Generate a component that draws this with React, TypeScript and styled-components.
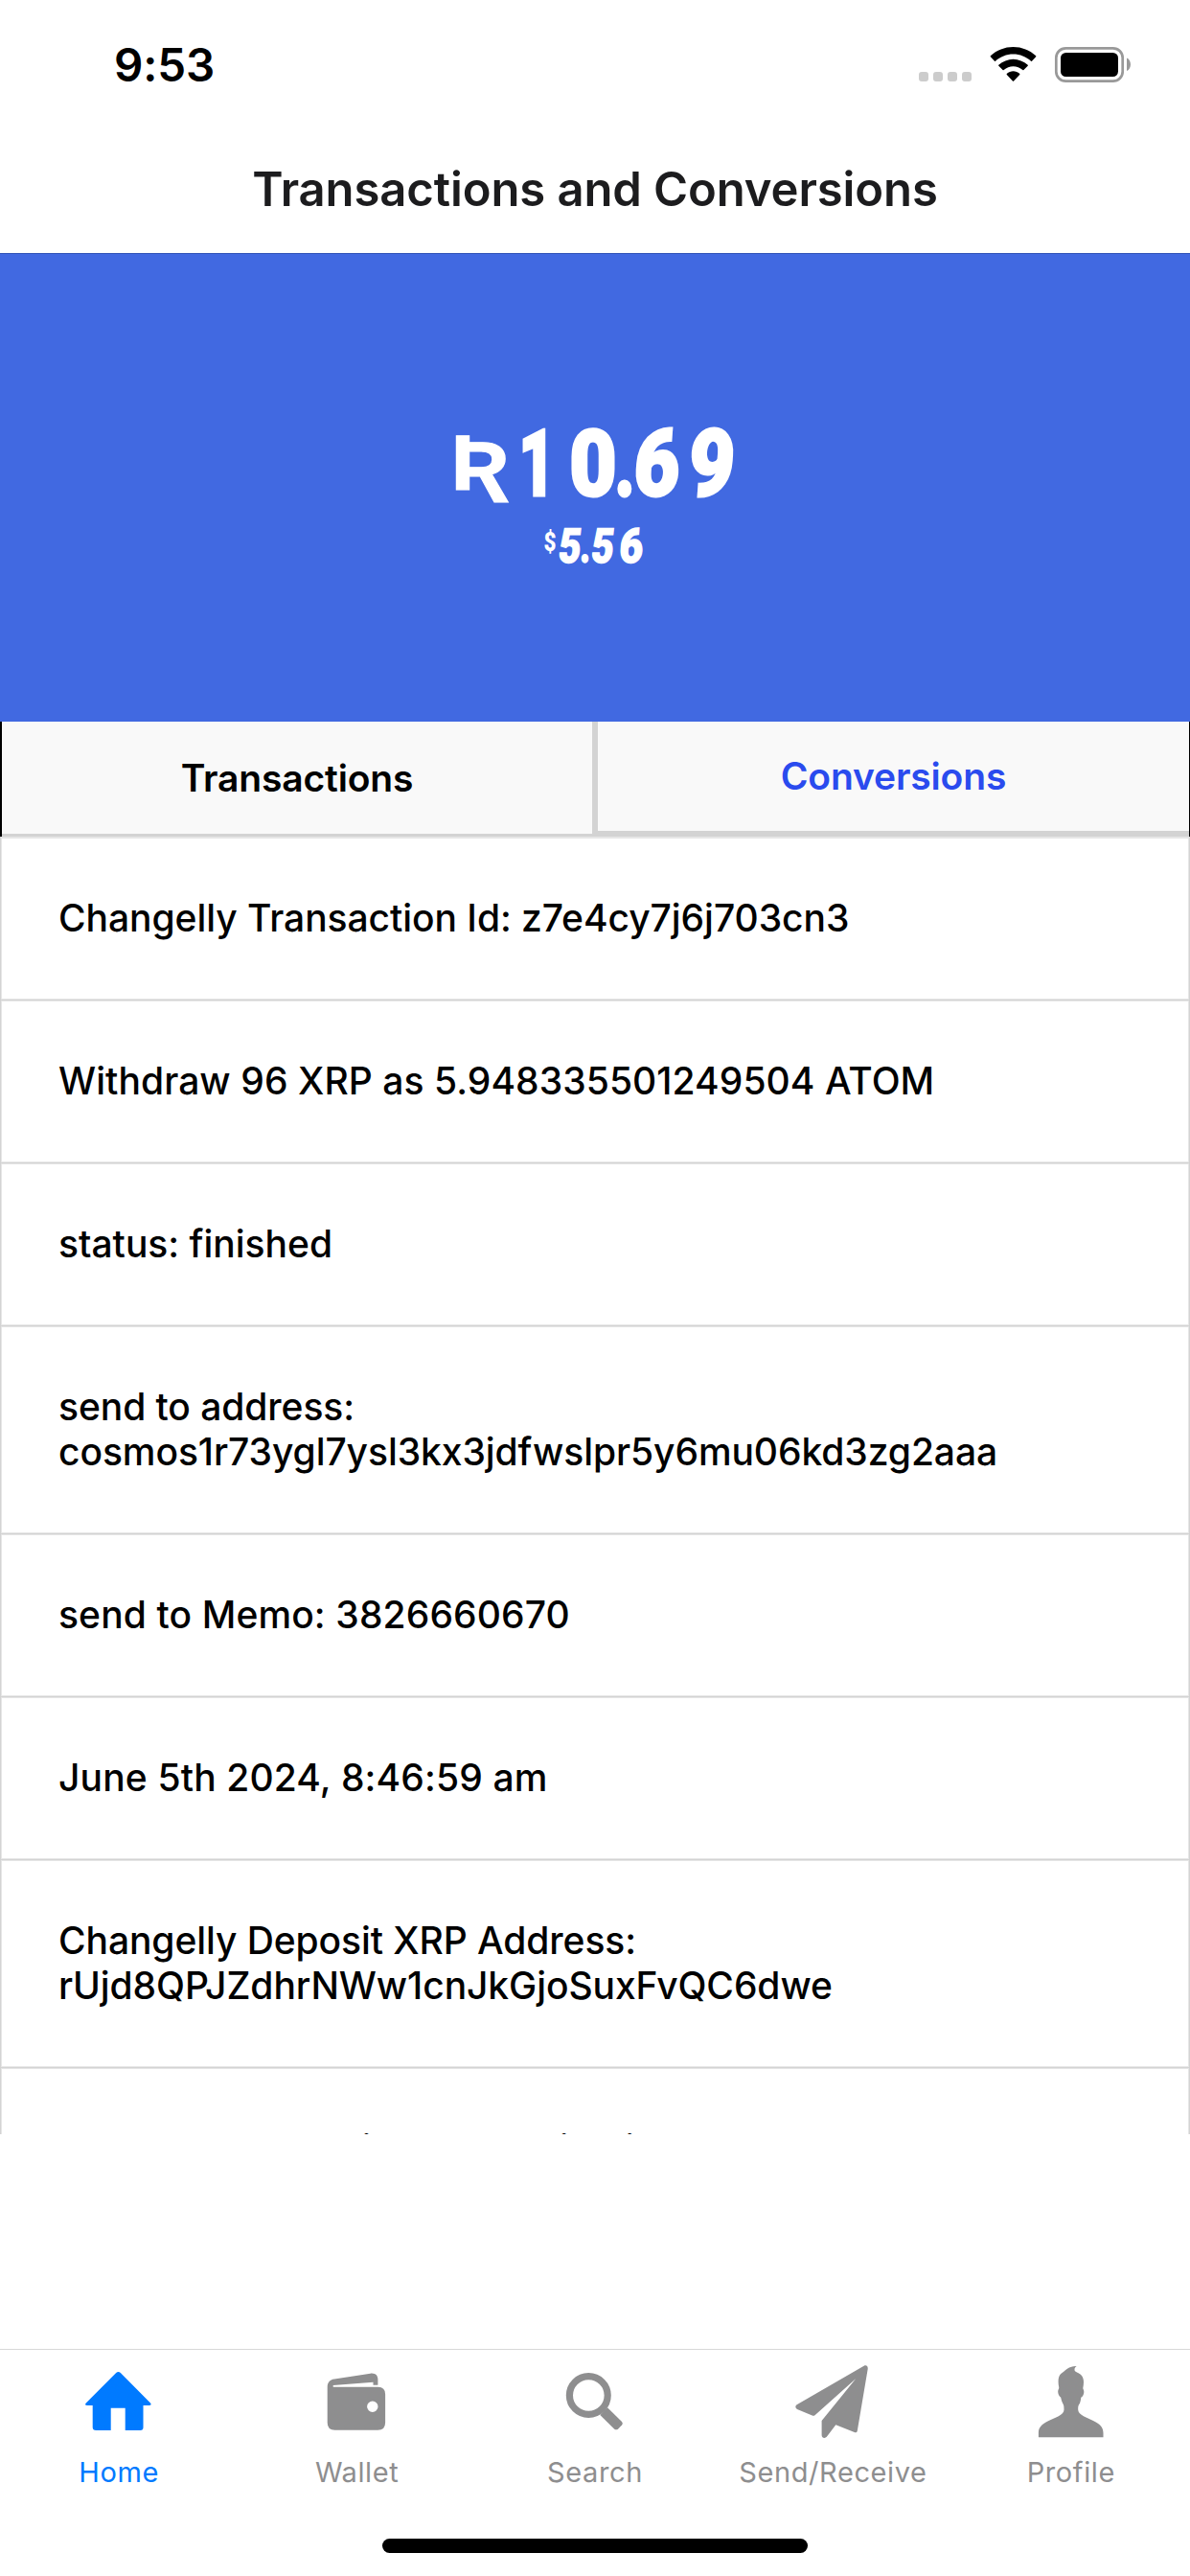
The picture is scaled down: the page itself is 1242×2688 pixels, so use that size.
import React from "react";
import styled, { createGlobalStyle } from "styled-components";

const GlobalStyle = createGlobalStyle`
  * { box-sizing: border-box; }
  body { margin: 0; background: #fff; font-family: Inter, "Liberation Sans", sans-serif; }
`;

const Screen = styled.div`
  width: 1242px;
  height: 2688px;
  display: flex;
  flex-direction: column;
  overflow: hidden;
  background: #fff;
`;

const StatusBar = styled.div`
  height: 132px;
  display: flex;
  justify-content: space-between;
  align-items: flex-start;
  padding: 36px 60px 0 119px;
`;

const Clock = styled.div`
  font-size: 47.5px;
  font-weight: 600;
  line-height: 64px;
  letter-spacing: -0.1px;
  color: #000;
`;

const StatusGlyphs = styled.svg`
  margin-top: 11px;
`;

const Header = styled.header`
  height: 132px;
  display: flex;
  justify-content: center;
  padding-top: 35px;
`;

const Title = styled.h1`
  margin: 0;
  font-size: 49px;
  font-weight: 600;
  line-height: 62px;
  letter-spacing: -0.1px;
  color: #1c1c1e;
  white-space: nowrap;
`;

const Balance = styled.section`
  height: 489px;
  display: flex;
  flex-direction: column;
  align-items: center;
  gap: 10px;
  background: #4169e1;
  border-top: 1px solid #3355b8;
  color: #fff;
  padding-top: 169px;
`;

const Amount = styled.div<{ $size: number; $height: number; $stroke: number }>`
  display: flex;
  height: ${(p) => p.$height}px;
  padding-right: 4px;
  font-family: Roboto, Inter, sans-serif;
  font-size: ${(p) => p.$size}px;
  line-height: ${(p) => p.$height}px;
  font-weight: 900;
  -webkit-text-stroke: ${(p) => p.$stroke}px #fff;
`;

const Digit = styled.span<{ $w: number; $tilt?: number; $squeeze?: number }>`
  display: flex;
  justify-content: center;
  width: ${(p) => p.$w}px;
  transform: skewX(${(p) => p.$tilt ?? 0}deg) scaleX(${(p) => p.$squeeze ?? 1});
`;

const Symbol = styled(Digit)`
  font-family: "Liberation Sans", "DejaVu Sans", sans-serif;
  font-weight: 700;
  font-size: 82px;
  line-height: 98px;
  -webkit-text-stroke: 1px #fff;
`;

const Dollar = styled(Digit)`
  font-size: 28px;
  line-height: 44px;
  -webkit-text-stroke: 0;
`;

const Tabs = styled.div`
  height: 120px;
  display: flex;
  background: #d3d3d3;
  border-left: 2px solid #000;
  border-right: 1px solid #000;
`;

const Tab = styled.button<{ $active?: boolean }>`
  flex: none;
  width: ${(p) => (p.$active ? 617 : 616)}px;
  height: ${(p) => (p.$active ? 114 : 117)}px;
  margin: 0 0 0 ${(p) => (p.$active ? 6 : 0)}px;
  padding: 0;
  border: 0;
  background: #f9f9f9;
  font-family: inherit;
  font-size: 39px;
  font-weight: 600;
  line-height: 48px;
  letter-spacing: -0.15px;
  color: ${(p) => (p.$active ? "#2a4bee" : "#000")};
`;

const List = styled.div`
  height: 1354px;
  overflow: hidden;
  border: solid #d3d3d3;
  border-width: 0 1px;
  box-shadow: inset 0 2px 0 #e6e6e6;
  padding-top: 2px;
`;

const Row = styled.div<{ $track?: number }>`
  padding: 59px 61px 63px 60px;
  border-bottom: 1px solid #e6e6e6;
  box-shadow: inset 0 -1px 0 #d3d3d3, inset 0 -2px 0 #e6e6e6, inset 1px 0 0 #e6e6e6, inset -1px 0 0 #e6e6e6;
  font-size: 39px;
  font-weight: 500;
  line-height: 47px;
  letter-spacing: ${(p) => p.$track ?? 0}px;
  color: #000;
  white-space: pre-line;
`;

const TabBar = styled.nav`
  margin-top: auto;
  height: 198px;
  display: grid;
  grid-template-columns: repeat(5, 1fr);
  border-top: 1px solid #d8d8d8;
`;

const NavItem = styled.a<{ $active?: boolean }>`
  display: flex;
  flex-direction: column;
  align-items: center;
  padding-top: 8px;
  color: ${(p) => (p.$active ? "#007aff" : "#8e8e8f")};
  font-size: 29px;
  line-height: 36px;
  letter-spacing: 0.6px;
  gap: 12px;
`;

const NavIcon = styled.svg`
  width: 90px;
  height: 90px;
  fill: currentColor;
`;

const HomeIndicatorArea = styled.div`
  height: 39px;
  display: flex;
  justify-content: center;
`;

const HomeIndicator = styled.div`
  width: 444px;
  height: 15px;
  border-radius: 8px;
  background: #000;
`;

const rows: { text: string; track: number }[] = [
  { text: "Changelly Transaction Id: z7e4cy7j6j703cn3", track: -0.05 },
  { text: "Withdraw 96 XRP as 5.948335501249504 ATOM", track: 0.07 },
  { text: "status: finished", track: 0 },
  { text: "send to address:\ncosmos1r73ygl7ysl3kx3jdfwslpr5y6mu06kd3zg2aaa", track: -0.07 },
  { text: "send to Memo: 3826660670", track: 0.12 },
  { text: "June 5th 2024, 8:46:59 am", track: 0.15 },
  { text: "Changelly Deposit XRP Address:\nrUjd8QPJZdhrNWw1cnJkGjoSuxFvQC6dwe", track: -0.08 },
  { text: "Changelly Deposit XRP Destination Tag:", track: -0.05 },
];

const StatusIcons = () => (
  <StatusGlyphs width="225" height="40" viewBox="955 47 225 40">
    <g fill="#ccc">
      <rect x="957" y="75" width="10" height="10" rx="3" />
      <rect x="972" y="75" width="10" height="10" rx="3" />
      <rect x="987" y="75" width="10" height="10" rx="3" />
      <rect x="1002" y="75" width="10" height="10" rx="3" />
    </g>
    <path d="M1055.500 49C1064.500 49 1072.800 52.400 1079.200 58.300Q1079.600 58.800 1079.200 59.300L1075 63.700Q1074.500 64.100 1074 63.700C1069 59.200 1062.500 56.500 1055.500 56.500S1042 59.200 1037 63.700Q1036.500 64.100 1036 63.700L1031.800 59.300Q1031.400 58.800 1031.800 58.300C1038.200 52.400 1046.500 49 1055.500 49Z" />
    <path d="M1055.500 61.700C1061 61.700 1066.500 64 1070.700 67.800Q1071.200 68.300 1070.700 68.800L1066.400 73.100Q1065.900 73.500 1065.400 73.100C1062.500 70.600 1059.200 69.300 1055.500 69.300S1048.500 70.600 1045.600 73.100Q1045.100 73.500 1044.600 73.100L1040.300 68.800Q1039.800 68.300 1040.300 67.800C1044.500 64 1050 61.700 1055.500 61.700Z" />
    <path d="M1055.500 74.300C1058 74.300 1060.300 75.200 1062.100 76.700Q1062.700 77.300 1062.200 77.900L1056.100 84.500Q1055.500 85.100 1054.900 84.500L1048.800 77.900Q1048.300 77.300 1048.900 76.700C1050.700 75.200 1053 74.300 1055.500 74.300Z" />
    <rect x="1100.300" y="50.300" width="69.400" height="34.400" rx="10" fill="none" stroke="#999" strokeWidth="2.700" />
    <rect x="1105" y="55" width="60" height="25" rx="5.500" />
    <path d="M1174 60.500C1179.300 62.700 1179.300 71.800 1174 74Z" fill="#999" />
  </StatusGlyphs>
);

const icons: Record<string, React.ReactNode> = {
  Home: (
    <path d="M42.200 16Q44.500 13.800 46.800 16L78 47.600Q79.800 49.800 76.500 50H70.500V73Q70.500 76 67.500 76H51.700V52.700H36.700V76H21.200Q17.700 76 17.700 73V50H12Q8.800 49.800 10.800 47.600Z" />
  ),
  Wallet: (
    <path
      fillRule="evenodd"
      d="M13.700 31.500C13.700 26 16 23.200 21 22.500L58.500 16.700C64 16 66.400 19 66.400 23V28.700H61.500V25.700L19.700 28.900V30.700H66.500Q74.100 30.700 74.100 38.300V68Q74.100 75.800 66.300 75.800H21.500Q13.700 75.800 13.700 68ZM60.800 45.500A5.700 5.700 0 1 0 60.800 56.900A5.700 5.700 0 1 0 60.800 45.500Z"
    />
  ),
  Search: (
    <>
      <circle cx="38.300" cy="39.500" r="19.900" fill="none" stroke="currentColor" strokeWidth="7.200" />
      <path d="M50.300 60L58 52.300L73 67Q74.600 68.700 73.200 70.300L69.200 74.500Q67 76.200 65 74.500Z" />
    </>
  ),
  "Send/Receive": (
    <path d="M77.700 8.800C80 7.600 82.100 9 81.700 12L70.800 76.500Q70.300 79 67.800 78.100L48.300 70.300L38.800 82.800C37.200 84.800 33.600 84.200 33.600 81V66L69.300 22L26.500 60.200Q25.200 61.200 23.700 60.500L8 54Q4.800 51.700 7.600 49.300Z" />
  ),
  Profile: (
    <path d="M10.900 83.300V78.500C11 72.500 14.500 69.800 21 66.300C28 63 37.600 60 37.500 54.500C37.500 50.500 37.200 49.500 36 47.500Q34.900 45.500 34.200 41.700C32.200 40.500 31.200 38 31.200 35.500C31.200 33.500 32.500 32.500 32.200 31C31 25 31.300 19.500 34.500 16.700C38 14.500 40 12 43 10.500Q47 8.500 50.700 9C48.600 10.300 48.300 12 48.600 13.500C49.500 15.500 53 15.500 56 19C58.500 22.500 58.300 26.500 57.300 32C57.300 33.300 58.400 33.600 58.300 36C58.300 38 57.300 40.700 55.300 41.700Q54.800 46 54 47.700C52.500 50 52.200 50.500 52.200 54.500C52.300 60 62 63 68.500 66.300C75 69.800 78.500 72.500 78.500 79V83.300Z" />
  ),
};

const navLabels = ["Home", "Wallet", "Search", "Send/Receive", "Profile"];

export default function App() {
  return (
    <Screen>
      <GlobalStyle />
      <StatusBar>
        <Clock>9:53</Clock>
        <StatusIcons />
      </StatusBar>
      <Header>
        <Title>Transactions and Conversions</Title>
      </Header>
      <Balance>
        <Amount $size={97} $height={100} $stroke={3}>
          <Symbol $w={62} $squeeze={1.12}>Ʀ</Symbol>
          <Digit $w={57} $squeeze={0.68}>1</Digit>
          <Digit $w={60} $squeeze={0.88}>0</Digit>
          <Digit $w={6} $squeeze={0.72}>.</Digit>
          <Digit $w={62} $tilt={-4} $squeeze={0.85}>6</Digit>
          <Digit $w={52} $tilt={-4} $squeeze={0.85}>9</Digit>
        </Amount>
        <Amount $size={50} $height={52} $stroke={1.5}>
          <Dollar $w={14} $squeeze={0.8}>$</Dollar>
          <Digit $w={28} $tilt={-6} $squeeze={0.8}>5</Digit>
          <Digit $w={3} $squeeze={0.7}>.</Digit>
          <Digit $w={35} $tilt={-6} $squeeze={0.8}>5</Digit>
          <Digit $w={24} $tilt={-4} $squeeze={0.85}>6</Digit>
        </Amount>
      </Balance>
      <Tabs>
        <Tab>Transactions</Tab>
        <Tab $active>Conversions</Tab>
      </Tabs>
      <List>
        {rows.map((r) => (
          <Row key={r.text} $track={r.track}>{r.text}</Row>
        ))}
      </List>
      <TabBar>
        {navLabels.map((label) => (
          <NavItem key={label} $active={label === "Home"}>
            <NavIcon viewBox="0 0 90 90">{icons[label]}</NavIcon>
            {label}
          </NavItem>
        ))}
      </TabBar>
      <HomeIndicatorArea>
        <HomeIndicator />
      </HomeIndicatorArea>
    </Screen>
  );
}
